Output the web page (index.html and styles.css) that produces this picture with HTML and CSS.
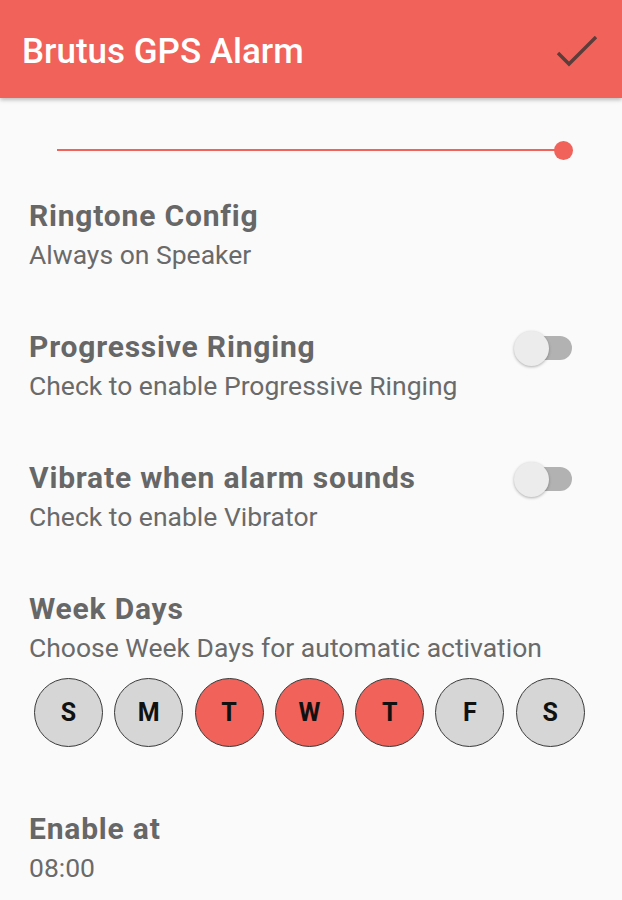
FILE: index.html
```html
<!DOCTYPE html>
<html lang="en">
<head>
    <meta charset="UTF-8">
    <meta name="viewport" content="width=device-width, initial-scale=1.0">
    <title>Brutus GPS Alarm</title>
    <link rel="stylesheet" href="styles.css">
</head>
<body>
    <header class="toolbar">
        <h1 class="toolbar-title">Brutus GPS Alarm</h1>
        <svg class="toolbar-check" width="44" height="36" viewBox="0 0 44 36">
            <path d="M2 17 L13 28 L40 1" fill="none" stroke="#5b3d3a" stroke-width="3.4"/>
        </svg>
    </header>

    <main class="settings">
        <div class="slider">
            <div class="slider-track"></div>
            <div class="slider-thumb"></div>
        </div>

        <section class="pref">
            <div class="pref-text">
                <h2 class="pref-title">Ringtone Config</h2>
                <p class="pref-summary">Always on Speaker</p>
            </div>
        </section>

        <section class="pref">
            <div class="pref-text">
                <h2 class="pref-title">Progressive Ringing</h2>
                <p class="pref-summary">Check to enable Progressive Ringing</p>
            </div>
            <div class="switch"><span class="switch-thumb"></span></div>
        </section>

        <section class="pref">
            <div class="pref-text">
                <h2 class="pref-title">Vibrate when alarm sounds</h2>
                <p class="pref-summary">Check to enable Vibrator</p>
            </div>
            <div class="switch"><span class="switch-thumb"></span></div>
        </section>

        <section class="pref pref-days">
            <div class="pref-text">
                <h2 class="pref-title">Week Days</h2>
                <p class="pref-summary">Choose Week Days for automatic activation</p>
            </div>
            <div class="days">
                <span class="day">S</span>
                <span class="day">M</span>
                <span class="day on">T</span>
                <span class="day on">W</span>
                <span class="day on">T</span>
                <span class="day">F</span>
                <span class="day">S</span>
            </div>
        </section>

        <section class="pref pref-last">
            <div class="pref-text">
                <h2 class="pref-title">Enable at</h2>
                <p class="pref-summary">08:00</p>
            </div>
        </section>
    </main>
</body>
</html>
```

FILE: styles.css
```css
body {
    margin: 0;
    padding: 0;
    font-family: Roboto, "Liberation Sans", sans-serif;
    background-color: #fafafa;
    height: 900px;
    overflow: hidden;
}
.toolbar {
    height: 98px;
    box-sizing: border-box;
    background: #f0625a;
    display: flex;
    align-items: center;
    justify-content: space-between;
    padding: 4px 22px 0 22px;
    box-shadow: 0 2px 4px rgba(0,0,0,0.25);
    position: relative;
}
.toolbar-title {
    margin: 0;
    color: #fff;
    font-size: 35px;
    font-weight: 500;
}
.toolbar-check {
    margin-top: 6px;
}
.settings {
    padding: 0 29px;
}
.slider {
    display: flex;
    align-items: center;
    margin: 42px 20px 0 28px;
    height: 20px;
}
.slider-track {
    flex: 1;
    height: 2px;
    background: #f0625a;
}
.slider-thumb {
    width: 19px;
    height: 19px;
    border-radius: 50%;
    background: #f0625a;
    margin-left: -10px;
}
.pref {
    display: flex;
    justify-content: space-between;
    align-items: flex-start;
    margin-top: 40px;
}
.pref + .pref {
    margin-top: 58px;
}
.pref-title {
    margin: 0;
    font-size: 30px;
    line-height: 32px;
    font-weight: 700;
    letter-spacing: 0.8px;
    color: #676767;
}
.pref-summary {
    margin: 5px 0 0;
    font-size: 26.5px;
    line-height: 36px;
    color: #6a6a6a;
}
.switch {
    position: relative;
    width: 58px;
    height: 24px;
    margin: 3px 21px 0 0;
}
.switch::before {
    content: "";
    position: absolute;
    left: 18px;
    right: 0;
    top: 2px;
    height: 24px;
    border-radius: 12px;
    background: #b2b2b2;
}
.switch-thumb {
    position: absolute;
    left: 0;
    top: -3px;
    width: 35px;
    height: 35px;
    border-radius: 50%;
    background: #ececec;
    box-shadow: 0 1px 3px rgba(0,0,0,0.3);
}
.pref-days {
    flex-direction: column;
}
.days {
    display: flex;
    gap: 11.3px;
    margin: 12px 0 0 5px;
}
.day {
    box-sizing: border-box;
    width: 69px;
    height: 69px;
    border-radius: 50%;
    border: 1.5px solid #3a3a3a;
    background: #d6d6d6;
    display: flex;
    align-items: center;
    justify-content: center;
    font-size: 25px;
    font-weight: 700;
    color: #111;
}
.day.on {
    background: #f0625a;
}
.pref + .pref-last {
    margin-top: 66px;
}
```
